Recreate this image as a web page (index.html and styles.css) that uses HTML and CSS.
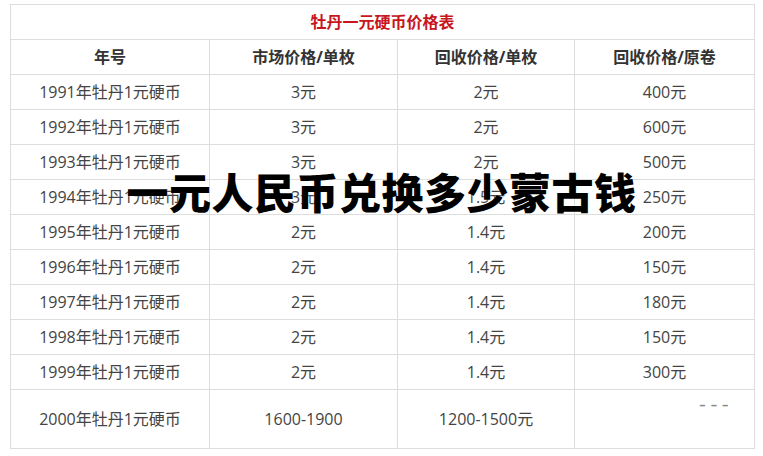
FILE: index.html
```html
<!DOCTYPE html>
<html lang="zh-CN">
<head>
<meta charset="utf-8">
<title>一元人民币兑换多少蒙古钱</title>
<link rel="stylesheet" href="styles.css">
</head>
<body>
<div class="page">
  <table class="price-table">
    <colgroup>
      <col class="c1"><col class="c2"><col class="c3"><col class="c4">
    </colgroup>
    <tr class="title-row"><td colspan="4">牡丹一元硬币价格表</td></tr>
    <tr class="head-row"><th>年号</th><th>市场价格/单枚</th><th>回收价格/单枚</th><th>回收价格/原卷</th></tr>
    <tr><td>1991年牡丹1元硬币</td><td>3元</td><td>2元</td><td>400元</td></tr>
    <tr><td>1992年牡丹1元硬币</td><td>3元</td><td>2元</td><td>600元</td></tr>
    <tr><td>1993年牡丹1元硬币</td><td>3元</td><td>2元</td><td>500元</td></tr>
    <tr><td>1994年牡丹1元硬币</td><td>3元</td><td>1.5元</td><td>250元</td></tr>
    <tr><td>1995年牡丹1元硬币</td><td>2元</td><td>1.4元</td><td>200元</td></tr>
    <tr><td>1996年牡丹1元硬币</td><td>2元</td><td>1.4元</td><td>150元</td></tr>
    <tr><td>1997年牡丹1元硬币</td><td>2元</td><td>1.4元</td><td>180元</td></tr>
    <tr><td>1998年牡丹1元硬币</td><td>2元</td><td>1.4元</td><td>150元</td></tr>
    <tr><td>1999年牡丹1元硬币</td><td>2元</td><td>1.4元</td><td>300元</td></tr>
    <tr class="last-row"><td>2000年牡丹1元硬币</td><td>1600-1900</td><td>1200-1500元</td><td class="dash">---</td></tr>
  </table>
  <h1 class="overlay-title">一元人民币兑换多少蒙古钱</h1>
</div>
</body>
</html>
```

FILE: styles.css
```css
html, body {
  margin: 0;
  padding: 0;
  background: #fff;
}
.page {
  position: relative;
  width: 763px;
  height: 456px;
  overflow: hidden;
  padding-top: 4px;
  box-sizing: border-box;
  font-family: "Open Sans", "Noto Sans CJK SC", sans-serif;
}
.price-table {
  margin-left: 10px;
  width: 744px;
  border-collapse: collapse;
  table-layout: fixed;
  color: #444;
  font-size: 16px;
}
.c1 { width: 199px; }
.c2 { width: 188px; }
.c3 { width: 177px; }
.c4 { width: 180px; }
.price-table td,
.price-table th {
  border: 1px solid #dddddd;
  text-align: center;
  vertical-align: middle;
  padding: 0;
  line-height: 20px;
}
.price-table tr {
  height: 35px;
}
.title-row td {
  color: #c8161d;
  font-size: 16px;
  font-weight: 700;
}
.head-row th {
  color: #333;
  font-size: 16px;
  font-weight: 700;
}
.last-row {
  height: 59px !important;
}
.price-table td.dash {
  vertical-align: top;
  text-align: right;
  padding: 6px 23px 0 0;
  color: #888;
  font-family: "Liberation Mono", monospace;
  font-size: 19px;
}
.overlay-title {
  position: absolute;
  left: 0;
  right: 0;
  top: 170px;
  margin: 0;
  text-align: center;
  font-family: "Noto Sans CJK SC", sans-serif;
  font-size: 42px;
  line-height: 42px;
  font-weight: 900;
  color: #000;
  letter-spacing: 0.5px;
  text-shadow: 0 0 2px rgba(255,255,255,0.6);
}
```
